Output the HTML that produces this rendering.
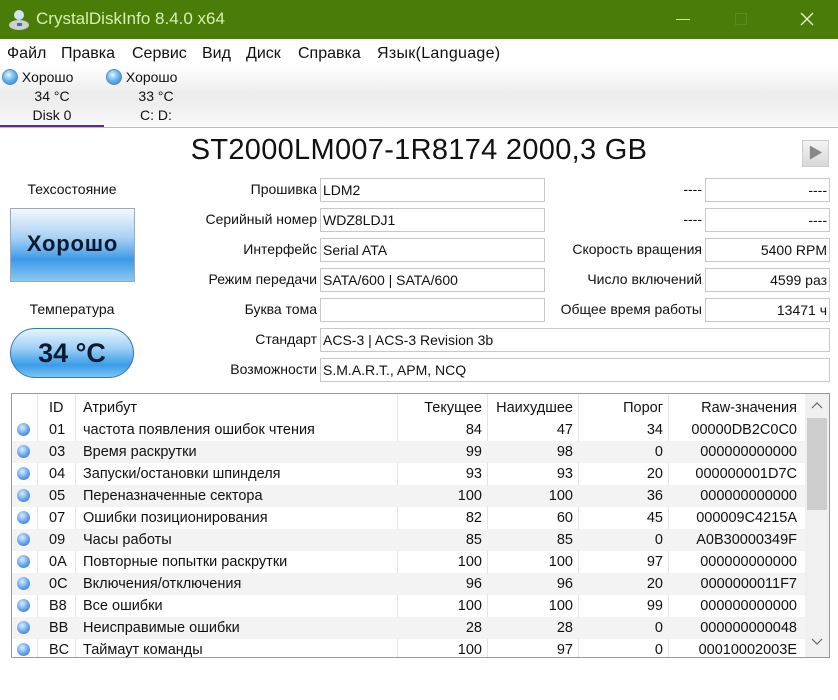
<!DOCTYPE html>
<html><head><meta charset="utf-8"><style>
*{box-sizing:border-box;margin:0;padding:0}
body{width:838px;height:700px;background:#fff;font-family:"Liberation Sans","Noto Sans CJK JP",sans-serif;font-size:14px;color:#111;position:relative;overflow:hidden}
.abs{position:absolute}
.title{left:0;top:0;width:838px;height:39px;background:#4a7c0a;color:#d8f0b0;font-size:17px}
.menu{top:45px;font-size:16px}
.tabs{left:0;top:66px;width:838px;height:62px;background:linear-gradient(#fff 0%,#ececec 45%,#f0f0f0 70%,#fafafa 100%);border-bottom:1px solid #bbb}
.dot{display:inline-block;width:16px;height:16px;border-radius:50%;background:radial-gradient(circle at 40% 35%,#e8f6ff 0%,#6ab8f0 45%,#2a7ad0 100%);border:1px solid #5a8cc0;vertical-align:-3px}
.lbl{text-align:right;width:200px;left:117px;font-size:14px}
.box{border:1px solid #c8c8c8;height:24px;padding:3px 2px;font-size:14px;background:#fff}
.tbl{left:11px;top:393px;width:819px;height:265px;border:1px solid #999;overflow:hidden}
.row{position:absolute;left:0;width:793px;height:22px;font-size:14.5px}
.row div{position:absolute;top:3px}
.alt{background:#f3f3f3}
.sd{width:13px;height:13px;border-radius:50%;background:radial-gradient(circle at 40% 35%,#dbeeff 0%,#6aa8ee 50%,#2d64c8 100%);left:5px;top:4px!important}
.r{text-align:right}
</style></head><body>
<div class="abs title">
 <svg class="abs" style="left:8px;top:8px" width="22" height="22"><circle cx="11" cy="7" r="5" fill="#cfe3f0"/><ellipse cx="11" cy="17" rx="10" ry="5" fill="#d0d0d0"/><rect x="9" y="15" width="5" height="3" fill="#3070c0"/></svg>
 <div class="abs" style="left:36px;top:9px">CrystalDiskInfo 8.4.0 x64</div>
 <div class="abs" style="left:676px;top:19px;width:14px;height:1px;background:#cfe8a8"></div>
 <div class="abs" style="left:735px;top:13px;width:12px;height:12px;border:1px solid #5c8a20"></div>
 <svg class="abs" style="left:800px;top:12px" width="14" height="14"><path d="M1 1L13 13M13 1L1 13" stroke="#e8f4d8" stroke-width="1.3"/></svg>
</div>
<div class="abs menu" style="left:7px">Файл</div>
<div class="abs menu" style="left:61px">Правка</div>
<div class="abs menu" style="left:132px">Сервис</div>
<div class="abs menu" style="left:202px">Вид</div>
<div class="abs menu" style="left:246px">Диск</div>
<div class="abs menu" style="left:298px">Справка</div>
<div class="abs menu" style="left:377px;letter-spacing:0.3px">Язык(Language)</div>
<div class="abs tabs">
 <div class="abs" style="left:2px;top:3px"><span class="dot"></span> Хорошо</div>
 <div class="abs" style="left:0;top:22px;width:104px;text-align:center">34 °C</div>
 <div class="abs" style="left:0;top:41px;width:104px;text-align:center">Disk 0</div>
 <div class="abs" style="left:0;top:59px;width:104px;height:2px;background:#5a2d8c"></div>
 <div class="abs" style="left:106px;top:3px"><span class="dot"></span> Хорошо</div>
 <div class="abs" style="left:106px;top:22px;width:100px;text-align:center">33 °C</div>
 <div class="abs" style="left:106px;top:41px;width:100px;text-align:center">C: D:</div>
</div>
<div class="abs" style="left:0;top:134px;width:838px;text-align:center;font-size:29px;letter-spacing:0.3px">ST2000LM007-1R8174 2000,3 GB</div>
<div class="abs" style="left:802px;top:140px;width:27px;height:27px;background:linear-gradient(#f4f4f4,#d8d8d8);border:1px solid #ccc;color:#888;font-size:15px;text-align:center;line-height:25px">▶</div>
<div class="abs" style="left:10px;top:181px;width:124px;text-align:center">Техсостояние</div>
<div class="abs" style="left:10px;top:208px;width:125px;height:74px;border:1px solid #9aa8c0;background:linear-gradient(#f4f8ff 0%,#a8d0f4 40%,#3c9ae8 70%,#8cc8f4 100%);font-weight:bold;font-size:22px;letter-spacing:0.8px;text-align:center;line-height:70px;color:#0a1a30">Хорошо</div>
<div class="abs" style="left:10px;top:301px;width:124px;text-align:center">Температура</div>
<div class="abs" style="left:10px;top:328px;width:124px;height:50px;border-radius:25px;border:1px solid #3a78b0;background:linear-gradient(#e8f4ff 0%,#9ed0f6 40%,#3a9ce8 75%,#7cc4f4 100%);font-weight:bold;font-size:27px;text-align:center;line-height:48px;color:#0a1a30">34 °C</div>

<div class="abs lbl" style="top:181px">Прошивка</div>
<div class="abs lbl" style="top:211px">Серийный номер</div>
<div class="abs lbl" style="top:241px">Интерфейс</div>
<div class="abs lbl" style="top:271px">Режим передачи</div>
<div class="abs lbl" style="top:301px">Буква тома</div>
<div class="abs lbl" style="top:331px">Стандарт</div>
<div class="abs lbl" style="top:361px">Возможности</div>
<div class="abs box" style="left:320px;top:178px;width:225px">LDM2</div>
<div class="abs box" style="left:320px;top:208px;width:225px">WDZ8LDJ1</div>
<div class="abs box" style="left:320px;top:238px;width:225px">Serial ATA</div>
<div class="abs box" style="left:320px;top:268px;width:225px">SATA/600 | SATA/600</div>
<div class="abs box" style="left:320px;top:298px;width:225px"></div>
<div class="abs box" style="left:320px;top:328px;width:510px">ACS-3 | ACS-3 Revision 3b</div>
<div class="abs box" style="left:320px;top:358px;width:510px">S.M.A.R.T., APM, NCQ</div>
<div class="abs lbl" style="left:502px;top:181px">----</div>
<div class="abs lbl" style="left:502px;top:211px">----</div>
<div class="abs lbl" style="left:502px;top:241px">Скорость вращения</div>
<div class="abs lbl" style="left:502px;top:271px">Число включений</div>
<div class="abs lbl" style="left:502px;top:301px">Общее время работы</div>
<div class="abs box r" style="left:705px;top:178px;width:125px">----</div>
<div class="abs box r" style="left:705px;top:208px;width:125px">----</div>
<div class="abs box r" style="left:705px;top:238px;width:125px">5400 RPM</div>
<div class="abs box r" style="left:705px;top:268px;width:125px">4599 раз</div>
<div class="abs box r" style="left:705px;top:298px;width:125px">13471 ч</div>

<div class="abs tbl">
 <div class="abs" style="left:25px;top:0;width:1px;height:265px;background:#e4e4e4"></div>
 <div class="abs" style="left:63px;top:0;width:1px;height:265px;background:#e4e4e4"></div>
 <div class="abs" style="left:385px;top:0;width:1px;height:265px;background:#e4e4e4"></div>
 <div class="abs" style="left:475px;top:0;width:1px;height:265px;background:#e4e4e4"></div>
 <div class="abs" style="left:566px;top:0;width:1px;height:265px;background:#e4e4e4"></div>
 <div class="abs" style="left:656px;top:0;width:1px;height:265px;background:#e4e4e4"></div>
 <div class="row" style="top:3px"><div style="left:37px">ID</div><div style="left:71px">Атрибут</div><div class="r" style="right:323px">Текущее</div><div class="r" style="right:232px">Наихудшее</div><div class="r" style="right:142px">Порог</div><div class="r" style="right:8px">Raw-значения</div></div>
 <div class="abs" style="left:793px;top:0;width:24px;height:263px;background:#f0f0f0"></div>
 <div class="abs" style="left:795px;top:24px;width:20px;height:92px;background:#cdcdcd"></div>
 <svg class="abs" style="left:799px;top:8px" width="12" height="8"><path d="M1 6L6 1L11 6" stroke="#666" fill="none" stroke-width="1.2"/></svg>
 <svg class="abs" style="left:799px;top:244px" width="12" height="8"><path d="M1 1L6 6L11 1" stroke="#666" fill="none" stroke-width="1.2"/></svg>
</div>
<div class="abs" style="left:12px;top:419px;width:792px">
 <div class="row" style="top:0"><div class="sd"></div><div style="left:37px">01</div><div style="left:71px">частота появления ошибок чтения</div><div class="r" style="right:323px">84</div><div class="r" style="right:232px">47</div><div class="r" style="right:142px">34</div><div class="r" style="right:8px">00000DB2C0C0</div></div>
 <div class="row alt" style="top:22px"><div class="sd"></div><div style="left:37px">03</div><div style="left:71px">Время раскрутки</div><div class="r" style="right:323px">99</div><div class="r" style="right:232px">98</div><div class="r" style="right:142px">0</div><div class="r" style="right:8px">000000000000</div></div>
 <div class="row" style="top:44px"><div class="sd"></div><div style="left:37px">04</div><div style="left:71px">Запуски/остановки шпинделя</div><div class="r" style="right:323px">93</div><div class="r" style="right:232px">93</div><div class="r" style="right:142px">20</div><div class="r" style="right:8px">000000001D7C</div></div>
 <div class="row alt" style="top:66px"><div class="sd"></div><div style="left:37px">05</div><div style="left:71px">Переназначенные сектора</div><div class="r" style="right:323px">100</div><div class="r" style="right:232px">100</div><div class="r" style="right:142px">36</div><div class="r" style="right:8px">000000000000</div></div>
 <div class="row" style="top:88px"><div class="sd"></div><div style="left:37px">07</div><div style="left:71px">Ошибки позиционирования</div><div class="r" style="right:323px">82</div><div class="r" style="right:232px">60</div><div class="r" style="right:142px">45</div><div class="r" style="right:8px">000009C4215A</div></div>
 <div class="row alt" style="top:110px"><div class="sd"></div><div style="left:37px">09</div><div style="left:71px">Часы работы</div><div class="r" style="right:323px">85</div><div class="r" style="right:232px">85</div><div class="r" style="right:142px">0</div><div class="r" style="right:8px">A0B30000349F</div></div>
 <div class="row" style="top:132px"><div class="sd"></div><div style="left:37px">0A</div><div style="left:71px">Повторные попытки раскрутки</div><div class="r" style="right:323px">100</div><div class="r" style="right:232px">100</div><div class="r" style="right:142px">97</div><div class="r" style="right:8px">000000000000</div></div>
 <div class="row alt" style="top:154px"><div class="sd"></div><div style="left:37px">0C</div><div style="left:71px">Включения/отключения</div><div class="r" style="right:323px">96</div><div class="r" style="right:232px">96</div><div class="r" style="right:142px">20</div><div class="r" style="right:8px">0000000011F7</div></div>
 <div class="row" style="top:176px"><div class="sd"></div><div style="left:37px">B8</div><div style="left:71px">Все ошибки</div><div class="r" style="right:323px">100</div><div class="r" style="right:232px">100</div><div class="r" style="right:142px">99</div><div class="r" style="right:8px">000000000000</div></div>
 <div class="row alt" style="top:198px"><div class="sd"></div><div style="left:37px">BB</div><div style="left:71px">Неисправимые ошибки</div><div class="r" style="right:323px">28</div><div class="r" style="right:232px">28</div><div class="r" style="right:142px">0</div><div class="r" style="right:8px">000000000048</div></div>
 <div class="row" style="top:220px;height:18px;overflow:hidden"><div class="sd"></div><div style="left:37px">BC</div><div style="left:71px">Таймаут команды</div><div class="r" style="right:323px">100</div><div class="r" style="right:232px">97</div><div class="r" style="right:142px">0</div><div class="r" style="right:8px">00010002003E</div></div>
</div>
</body></html>
